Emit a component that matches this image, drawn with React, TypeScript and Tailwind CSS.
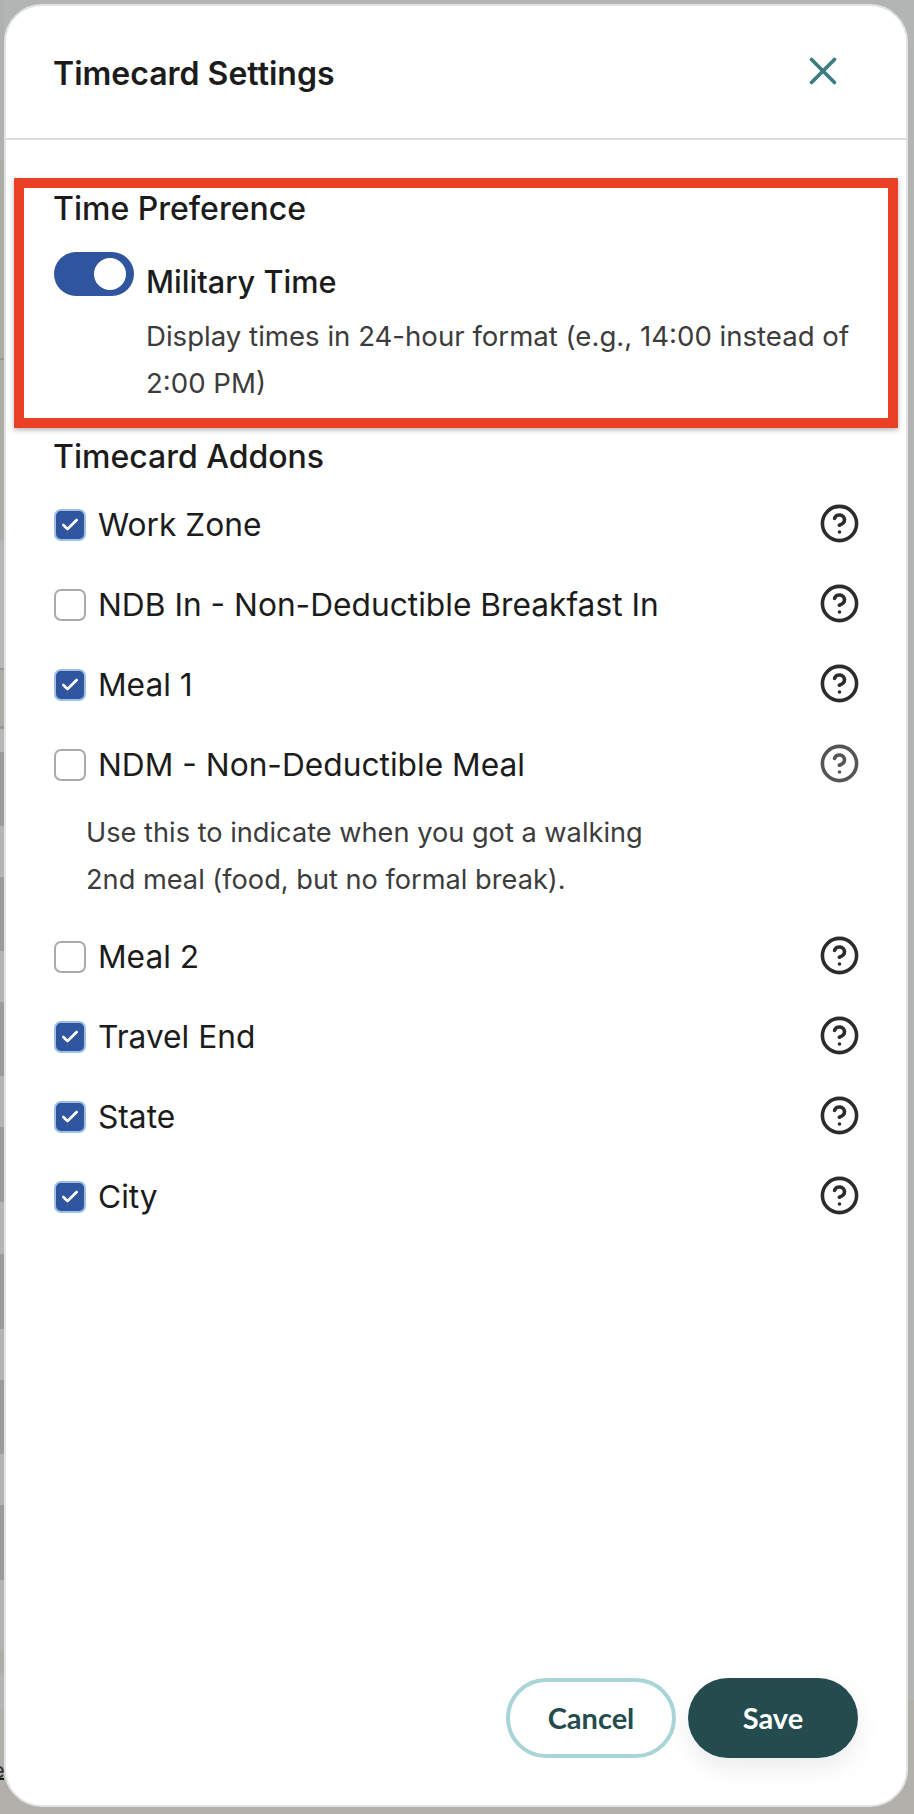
import { Check, CircleHelp, X } from "lucide-react";

const addons = [
  { label: "Work Zone", checked: true },
  { label: "NDB In - Non-Deductible Breakfast In", checked: false },
  { label: "Meal 1", checked: true },
  {
    label: "NDM - Non-Deductible Meal",
    checked: false,
    faded: true,
    note: ["Use this to indicate when you got a walking", "2nd meal (food, but no formal break)."],
  },
  { label: "Meal 2", checked: false },
  { label: "Travel End", checked: true },
  { label: "State", checked: true },
  { label: "City", checked: true },
];

// table rows of the dimmed page, showing at the left edge of the modal
const bands: [number, string][] = [
  [160, "#b0b2b2"],
  [198, "#acaca6"],
  [2, "#98999a"],
  [180, "#aeaea8"],
  [128, "#b5b7b8"],
  [2, "#98999a"],
  [56, "#acaba5"],
  [3, "#98999a"],
  [23, "#b5b7b8"],
  [74, "#9a9c9a"],
  [51, "#b3b5b5"],
  [74, "#9a9c9a"],
  [51, "#b3b5b5"],
  [74, "#9a9c9a"],
  [51, "#b3b5b5"],
  [75, "#9a9c9a"],
  [52, "#b3b5b5"],
  [75, "#9a9c9a"],
  [51, "#b3b5b5"],
  [74, "#9a9c9a"],
  [51, "#b3b5b5"],
  [75, "#9a9c9a"],
  [69, "#b3b5b5"],
  [24, "#aeada8"],
  [37, "#b3b5b5"],
  [50, "#b1b0aa"],
];

function Box({ checked }: { checked: boolean }) {
  if (checked) {
    return (
      <div className="w-8 h-8 shrink-0 rounded-[7px] border-2 border-[#9dc0e4] bg-[#2f559e] flex items-center justify-center">
        <Check size={20} strokeWidth={3.2} className="text-white" />
      </div>
    );
  }
  return <div className="w-8 h-8 shrink-0 rounded-[7px] border-2 border-[#aaaaa8] bg-white" />;
}

export default function App() {
  return (
    <div className="w-[914px] h-[1814px] flex bg-[#b1b2af] font-['Inter',sans-serif] overflow-hidden">
      {/* Page behind the modal */}
      <div className="w-[4px] h-full shrink-0 flex flex-col bg-[#b1b0aa]">
        {bands.map(([h, c], i) => (
          <div key={i} style={{ height: h, backgroundColor: c }} />
        ))}
        <div className="h-[20px] overflow-hidden border-b-2 border-[#1c1c1c] text-[22px] leading-[20px] text-[#333333] -ml-[8px] w-[12px]">e</div>
      </div>

      <div className="flex-1 pt-[4px] bg-[linear-gradient(#b3b5b5_1700px,#b1b0aa_1700px)]">
        {/* Modal */}
        <div className="w-[904px] h-[1803px] bg-white rounded-[38px] border-2 border-[#e2e3e2] flex flex-col overflow-hidden">
          <div className="h-[134px] shrink-0 border-b-2 border-[#dcdcdc] flex items-start justify-between pl-[47px] pr-[60px]">
            <h2 className="mt-[48px] text-[32px] leading-[40px] font-semibold text-[#1c1c1c]">Timecard Settings</h2>
            <X size={46} strokeWidth={1.9} className="mt-[42px] text-[#3a7d80]" />
          </div>

          {/* Time preference, red highlight */}
          <div className="mt-[38px] mx-[8px] h-[250px] shrink-0 border-[10px] border-[#ea4025] shadow-[0_2px_5px_rgba(0,0,0,0.3)] pl-[30px] pr-[20px]">
            <h3 className="mt-[2px] -ml-[1px] text-[32px] leading-[38px] font-medium text-[#1c1c1c]">Time Preference</h3>
            <div className="flex mt-[24px]">
              <div className="w-[80px] h-[44px] shrink-0 rounded-full bg-[#2f559e] flex items-center justify-end pr-[8px]">
                <div className="w-8 h-8 rounded-full bg-white" />
              </div>
              <div className="ml-[12px]">
                <div className="mt-[11px] text-[30.7px] leading-[38px] font-medium text-[#1c1c1c]">Military Time</div>
                <p className="mt-[12px] text-[27.6px] leading-[47px] text-[#3c3c3c]">
                  Display times in 24-hour format (e.g., 14:00 instead of 2:00 PM)
                </p>
              </div>
            </div>
          </div>

          {/* Addons */}
          <div className="pl-[48px] pr-[48px] flex-1 flex flex-col">
            <h3 className="mt-[10px] -ml-[1px] text-[32px] leading-[38px] font-medium text-[#1c1c1c]">Timecard Addons</h3>
            <div className="mt-[29px] flex flex-col gap-[40px]">
              {addons.map((a) => (
                <div key={a.label}>
                  <div className="h-[40px] flex items-center">
                    <Box checked={a.checked} />
                    <span className="ml-[12px] flex-1 text-[31.7px] leading-[40px] text-[#1c1c1c]">{a.label}</span>
                    <CircleHelp
                      size={41}
                      strokeWidth={2.1}
                      className={a.faded ? "text-[#555555] -mt-[3px] -mr-[2px]" : "text-[#2c2c2c] -mt-[3px] -mr-[2px]"}
                    />
                  </div>
                  {a.note && (
                    <div className="mt-[24px] -mb-[6px] pl-[32px] text-[27.2px] leading-[47px] text-[#3c3c3c]">
                      {a.note.map((n) => (
                        <p key={n}>{n}</p>
                      ))}
                    </div>
                  )}
                </div>
              ))}
            </div>

            <div className="mt-auto mb-[47px] flex justify-end gap-[12px] font-['Lato',sans-serif] text-[29px] font-bold">
              <button className="w-[170px] h-[80px] rounded-full border-[4px] border-[#aad5d8] bg-white text-[#244c4e]">Cancel</button>
              <button className="w-[170px] h-[80px] rounded-full bg-[#244c4e] text-white shadow-[0_10px_24px_rgba(0,0,0,0.08)]">Save</button>
            </div>
          </div>
        </div>
      </div>
    </div>
  );
}
